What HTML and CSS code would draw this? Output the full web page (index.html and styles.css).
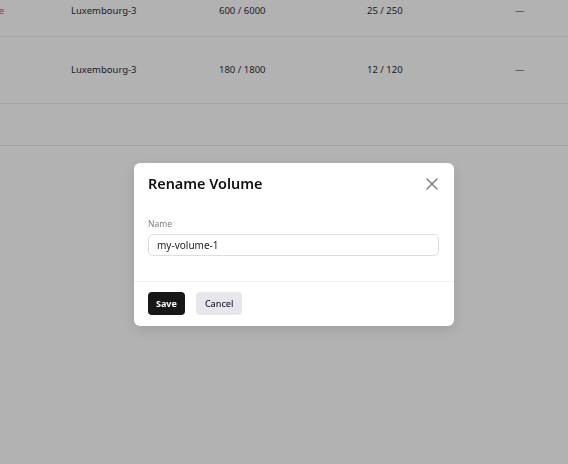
FILE: index.html
```html
<!DOCTYPE html>
<html>
<head>
<meta charset="utf-8">
<link rel="stylesheet" href="styles.css">
</head>
<body>
<div class="table">
  <div class="row row-first">
    <div class="cell cell-status"><span class="status">Unavailable</span></div>
    <div class="cell">Luxembourg-3</div>
    <div class="cell">600 / 6000</div>
    <div class="cell">25 / 250</div>
    <div class="cell">—</div>
  </div>
  <div class="row row-mid">
    <div class="cell cell-status"></div>
    <div class="cell">Luxembourg-3</div>
    <div class="cell">180 / 1800</div>
    <div class="cell">12 / 120</div>
    <div class="cell">—</div>
  </div>
  <div class="row row-empty"></div>
</div>

<div class="overlay">
  <div class="modal">
    <div class="modal-header">
      <h2 class="modal-title">Rename Volume</h2>
      <button class="close" aria-label="Close">
        <svg width="12" height="12" viewBox="0 0 12 12"><path d="M1 1L11 11M11 1L1 11" stroke="#767676" stroke-width="1.4" stroke-linecap="round" fill="none"/></svg>
      </button>
    </div>
    <div class="modal-body">
      <label class="label">Name</label>
      <div class="input">my-volume-1</div>
    </div>
    <div class="modal-footer">
      <button class="btn btn-primary">Save</button>
      <button class="btn btn-secondary">Cancel</button>
    </div>
  </div>
</div>
</body>
</html>
```

FILE: styles.css
```css
* { box-sizing: border-box; }
html, body { margin: 0; padding: 0; }
body {
  width: 568px;
  height: 464px;
  overflow: hidden;
  background: #ffffff;
  font-family: "Noto Sans", sans-serif;
  color: #2c2c38;
}
.table { display: flex; flex-direction: column; }
.row {
  display: grid;
  grid-template-columns: 71px 148px 148px 148px 1fr;
  border-bottom: 1px solid #ebebeb;
  font-size: 9.5px;
  line-height: 14px;
}
.row-first { height: 37px; padding-top: 4px; align-items: start; }
.row-mid { height: 67px; align-items: center; }
.row-empty { height: 42px; }
.cell { white-space: nowrap; }
.cell-status {
  display: flex;
  justify-content: flex-end;
  padding-right: 67px;
  overflow: hidden;
}
.status { color: #f24a14; }

.overlay {
  position: fixed;
  inset: 0;
  background: rgba(0, 0, 0, 0.3);
  display: flex;
  align-items: flex-start;
  padding: 163px 0 0 134px;
}
.modal {
  width: 320px;
  background: #ffffff;
  border-radius: 6px;
  box-shadow: 0 4px 14px rgba(0,0,0,0.12);
}
.modal-header {
  display: flex;
  justify-content: space-between;
  align-items: center;
  padding: 11px 15px 0 14px;
}
.modal-title {
  margin: 0;
  font-size: 14.4px;
  line-height: 20px;
  font-weight: 600;
  color: #111111;
}
.close {
  border: 0;
  background: none;
  padding: 0;
  width: 12px;
  height: 12px;
  display: flex;
  margin-right: 1px;
}
.modal-body {
  padding: 24px 15px 25px 14px;
  display: flex;
  flex-direction: column;
  gap: 4px;
}
.label {
  font-size: 8.5px;
  line-height: 12px;
  color: #7b7b7b;
}
.input {
  height: 22px;
  border: 1px solid #dedede;
  border-radius: 5px;
  padding: 0 8px;
  font-size: 10px;
  line-height: 20px;
  color: #1c1c1c;
}
.modal-footer {
  border-top: 1px solid #f1f1f1;
  padding: 10px 14px 11px;
  display: flex;
  gap: 11px;
}
.btn {
  height: 23px;
  border: 0;
  border-radius: 4px;
  font-family: "Noto Sans", sans-serif;
  font-size: 9px;
  line-height: 23px;
  padding: 0 8px;
  cursor: pointer;
}
.btn-primary {
  background: #171717;
  color: #ffffff;
  font-weight: 700;
}
.btn-secondary {
  background: #e8e6ec;
  color: #1c1c2a;
  font-weight: 500;
  padding: 0 9px;
}
```
